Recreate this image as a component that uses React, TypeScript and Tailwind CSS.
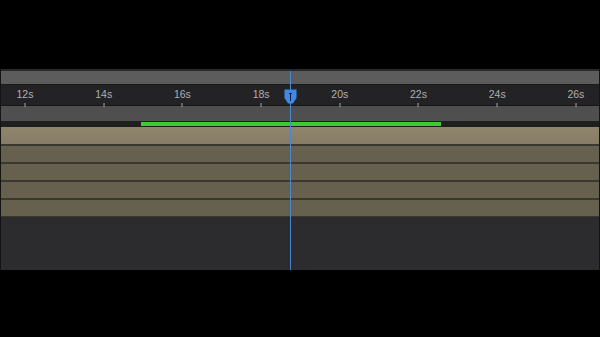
const ticks = [12, 14, 16, 18, 20, 22, 24, 26];
const tickX = (s: number) => 25 + ((s - 12) / 2) * 78.7;

function Row({ last }: { last?: boolean }) {
  return (
    <>
      <div className="h-[16px] bg-[#66614f]" />
      <div className={last ? "h-[1px] bg-[#3a382e]" : "h-[2px] bg-[#3a382e]"} />
    </>
  );
}

export default function App() {
  return (
    <div className="w-[600px] h-[337px] bg-black flex flex-col font-['Liberation_Sans',sans-serif]">
      <div className="h-[69px] shrink-0" />
      <div className="relative h-[201px] shrink-0 flex flex-col border-x border-[#141414]">
        <div className="h-[2px] bg-[#2a2a2a]" />
        <div className="h-[13px] bg-[#5c5c5c]" />
        <div className="h-[1px] bg-[#1a1a1a]" />
        {/* time ruler */}
        <div className="relative h-[20px] bg-[#232225]">
          {ticks.map((s) => (
            <div
              key={s}
              className="absolute top-0 flex flex-col items-center -translate-x-1/2"
              style={{ left: tickX(s) - 1 }}
            >
              <span className="text-[10.5px] leading-none mt-[4px] text-[#b0b0b0]">{s}s</span>
              <span className="mt-[3px] w-px h-[4px] bg-[#a8a8a8]" />
            </div>
          ))}
        </div>
        <div className="h-[1px] bg-[#161616]" />
        <div className="h-[15px] bg-[#4f4f4f]" />
        {/* work area bar */}
        <div className="relative h-[6px] bg-[#1f1f1f]">
          <div className="absolute left-[140px] w-[300px] top-[1px] h-[4px] bg-[#3ccc32]" />
        </div>
        <div className="h-[17px] bg-[linear-gradient(180deg,#8f846c,#877c65)]" />
        <div className="h-[2px] bg-[#3a382e]" />
        <Row />
        <Row />
        <Row />
        <Row last />
        <div className="flex-1 bg-[#2c2b2e]" />

        {/* playhead */}
        <div className="absolute left-[289px] top-[2px] bottom-0 w-px bg-[#4a86cc]" />
        <svg className="absolute left-[283px] top-[20px]" width="13" height="15" viewBox="0 0 13 15">
          <path d="M0.5 0.5 H12.5 V9 L9 14.5 H4 L0.5 9 Z" fill="#3f8ae6" />
          <rect x="6" y="4" width="1" height="8" fill="#10203a" />
          <rect x="5" y="4" width="3" height="1" fill="#10203a" />
        </svg>
      </div>
      <div className="flex-1" />
    </div>
  );
}
